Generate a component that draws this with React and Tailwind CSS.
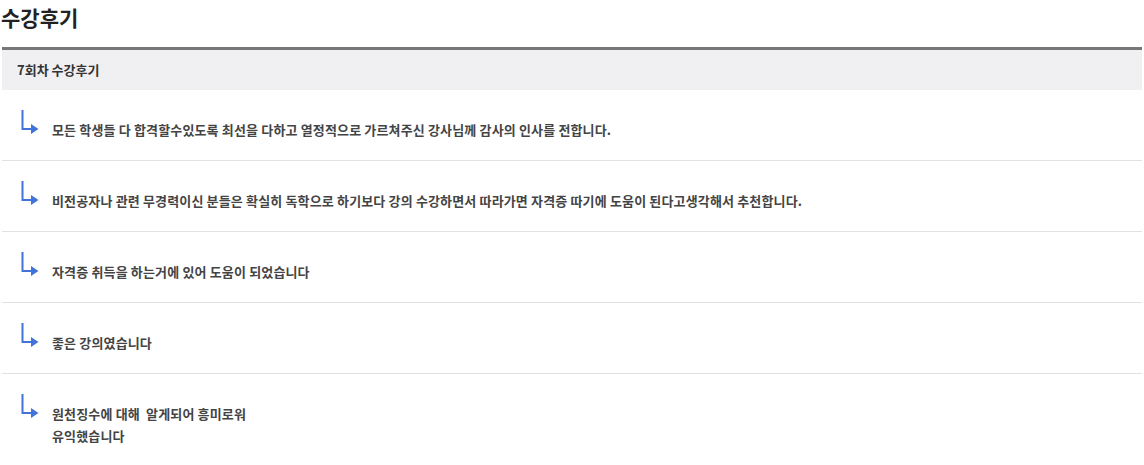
import React from 'react';

const reviews = [
  ['모든 학생들 다 합격할수있도록 최선을 다하고 열정적으로 가르쳐주신 강사님께 감사의 인사를 전합니다.'],
  ['비전공자나 관련 무경력이신 분들은 확실히 독학으로 하기보다 강의 수강하면서 따라가면 자격증 따기에 도움이 된다고생각해서 추천합니다.'],
  ['자격증 취득을 하는거에 있어 도움이 되었습니다'],
  ['좋은 강의였습니다'],
  ['원천징수에 대해  알게되어 흥미로워', '유익했습니다'],
];

function ReplyArrow() {
  return (
    <svg width="20" height="25" viewBox="0 0 20 25" className="shrink-0">
      <path d="M2.5 0 V19 H12" fill="none" stroke="#4173d8" strokeWidth="2" />
      <path d="M11 14 L18.5 19 L11 24 Z" fill="#4173d8" />
    </svg>
  );
}

export default function App() {
  return (
    <div className="w-[1144px] h-[465px] bg-white px-[2px] overflow-hidden" style={{ fontFamily: '"Noto Sans CJK KR", "Noto Sans", sans-serif' }}>
      <h2 className="text-[21px] font-bold text-[#222] leading-[34px] mb-[13px] -ml-[1px]">수강후기</h2>

      <div className="border-t-[3px] border-[#777]">
        <div className="h-[40px] bg-[#f0f0f2] flex items-center pl-[15px] text-[13px] font-bold text-[#333]">
          7회차 수강후기
        </div>

        {reviews.map((lines, i) => (
          <div key={i} className="flex items-start gap-[12px] pl-[18px] pt-[20px] pb-[19px] last:pb-[18px] border-b border-[#e2e2e2]">
            <ReplyArrow />
            <p className="mt-[9px] text-[13px] font-semibold tracking-[0.15px] leading-[22px] text-[#444] whitespace-pre">
              {lines.join('\n')}
            </p>
          </div>
        ))}
      </div>
    </div>
  );
}
